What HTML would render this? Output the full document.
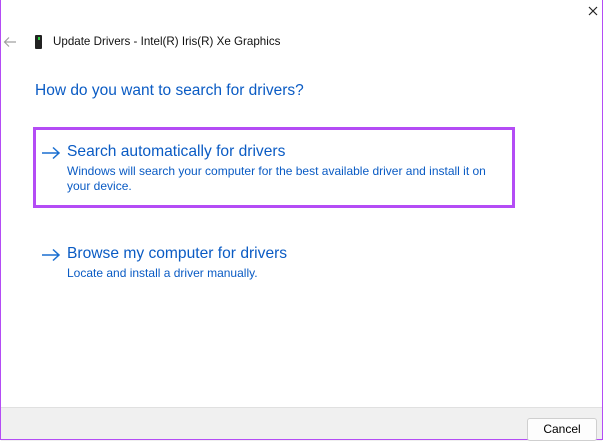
<!DOCTYPE html>
<html><head><style>
body{margin:0;width:603px;height:441px;overflow:hidden;background:#fff;font-family:"Liberation Sans",sans-serif;position:relative}
.frame{position:absolute;left:0;top:0;width:601px;height:439px;border:1px solid #b44cf5;border-top:none;}
.a{position:absolute;white-space:nowrap}
.blue{color:#0a5bc4}
.footer{position:absolute;left:1px;top:407px;width:601px;height:33px;background:#f0f0f0;border-top:1px solid #e0e0e0}
.btn{position:absolute;left:527px;top:418px;width:68px;height:21px;border:1px solid #cfcfcf;border-radius:3px;background:#fdfdfd;font-size:12px;text-align:center;line-height:21px;color:#000}
</style></head><body>
<div class="footer"></div>
<div class="frame"></div>
<svg class="a" style="left:588px;top:6px" width="10" height="10"><path d="M1 1L9 9M9 1L1 9" stroke="#222" stroke-width="1.2"/></svg>
<svg class="a" style="left:3px;top:36px" width="14" height="12"><path d="M13 6H2M6 1.5L1.5 6 6 10.5" stroke="#a0a0a0" stroke-width="1.2" fill="none"/></svg>
<div class="a" style="left:35px;top:35px;width:7px;height:14px;background:#222;border-radius:1px"></div>
<div class="a" style="left:38px;top:37px;width:2px;height:3px;background:#2ecc40"></div>
<div class="a" style="left:53px;top:35px;font-size:11.6px;color:#111">Update Drivers - Intel(R) Iris(R) Xe Graphics</div>
<div class="a blue" style="left:35px;top:82px;font-size:15.5px">How do you want to search for drivers?</div>
<div class="a" style="left:33px;top:127px;width:476px;height:75px;border:3px solid #b44cf5"></div>
<svg class="a" style="left:41px;top:146px" width="20" height="14"><path d="M1 7H18M12 1.5L18 7 12 12.5" stroke="#1a6fd0" stroke-width="1.5" fill="none"/></svg>
<div class="a blue" style="left:67px;top:143px;font-size:15.6px">Search automatically for drivers</div>
<div class="a blue" style="left:67px;top:164px;font-size:12px;line-height:15px">Windows will search your computer for the best available driver and install it on<br>your device.</div>
<svg class="a" style="left:41px;top:248px" width="20" height="14"><path d="M1 7H18M12 1.5L18 7 12 12.5" stroke="#1a6fd0" stroke-width="1.5" fill="none"/></svg>
<div class="a blue" style="left:67px;top:245px;font-size:15.6px">Browse my computer for drivers</div>
<div class="a blue" style="left:67px;top:266px;font-size:12px">Locate and install a driver manually.</div>
<div class="btn">Cancel</div>
</body></html>
